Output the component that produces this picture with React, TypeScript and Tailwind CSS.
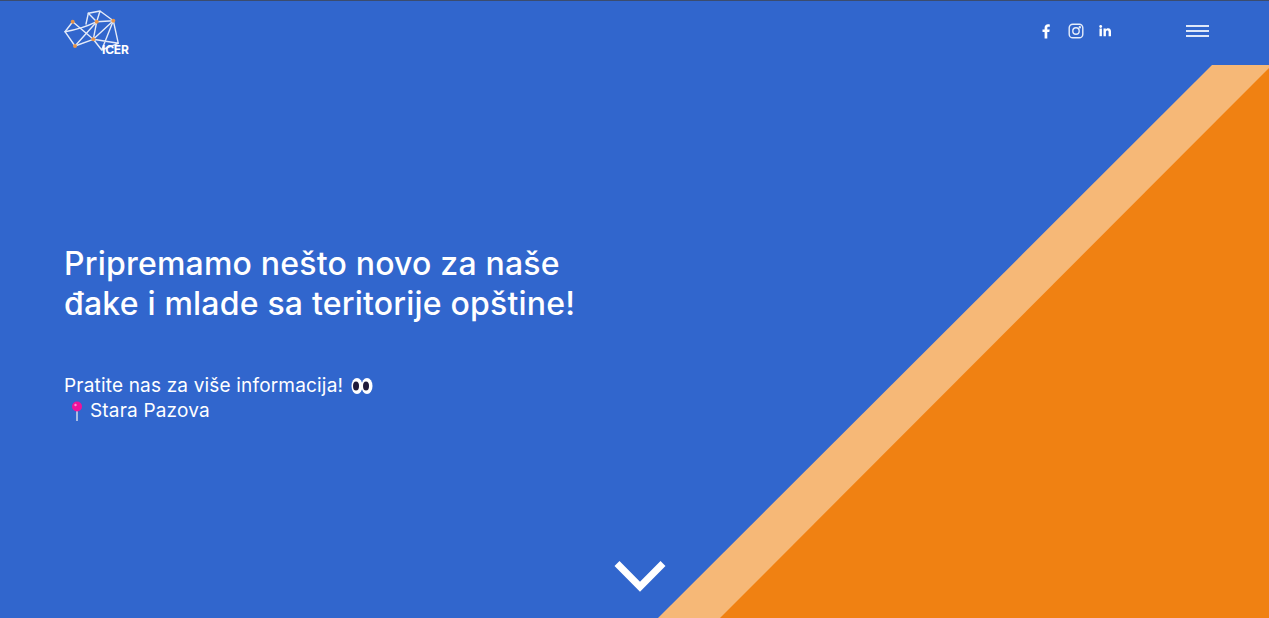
import React from "react";

function Logo() {
  const o = "#e8954a";
  return (
    <svg width="66" height="46" viewBox="0 0 66 46" className="block">
      <g fill="none" stroke="#e4ebf9" strokeWidth="1.400" strokeLinejoin="round" strokeLinecap="round">
        <path d="M8.700 11.700 L1 21.700 L11 36 L29.300 29.300 L8.700 11.700" />
        <path d="M1 21.700 Q18 19 32.700 11.700 L49.300 10.700 L36 1 L24.300 3.300 L32.700 11.700 L36 1" />
        <path d="M24.300 3.300 L22 14 M11 36 L32.700 11.700 L29.300 29.300 L49.300 10.700" />
        <path d="M49.300 10.700 L54.300 33.300 L37.700 40 L29.300 29.300 L54.300 33.300 M49.300 10.700 L37.700 40" />
      </g>
      <g fill={o}>
        <circle cx="8.700" cy="11.700" r="2" />
        <circle cx="32.700" cy="11.700" r="2" />
        <circle cx="49.300" cy="10.700" r="2" />
        <circle cx="29.300" cy="29.300" r="2" />
        <circle cx="11" cy="36" r="2" />
      </g>
    </svg>
  );
}

function Eyes() {
  return (
    <svg width="22" height="19" viewBox="0 0 22 19" className="inline-block">
      <ellipse cx="6" cy="10" rx="5.500" ry="8" fill="#fff" />
      <ellipse cx="16" cy="10" rx="5.500" ry="8" fill="#fff" />
      <ellipse cx="5" cy="10" rx="3" ry="4.500" fill="#1f1a3a" />
      <ellipse cx="15" cy="10" rx="3" ry="4.500" fill="#1f1a3a" />
    </svg>
  );
}

function Pin() {
  return (
    <svg width="14" height="20" viewBox="0 0 14 20" className="inline-block">
      <rect x="6.200" y="8" width="1.600" height="12" fill="#c9d3e8" />
      <circle cx="7" cy="5.500" r="5" fill="#f0129a" />
      <circle cx="5.500" cy="4" r="1.200" fill="#fb8fd0" />
    </svg>
  );
}

export default function App() {
  return (
    <div className="relative h-[618px] w-full overflow-hidden bg-[#3166cd] font-['Inter','Liberation_Sans',sans-serif] text-white">
      <svg className="absolute inset-0" width="1269" height="618" viewBox="0 0 1269 618">
        <polygon points="1212,65 1269,65 1269,618 658,618" fill="#f6b877" />
        <polygon points="1269,68 1269,618 720,618" fill="#f08112" />
      </svg>

      <div className="relative flex h-full flex-col">
        <header className="flex h-[65px] items-start border-t border-[#3b4c6e] pl-[64px] pr-[60px]">
          <div className="relative mt-[9px] h-[46px] w-[66px]">
            <Logo />
            <span className="absolute bottom-[0px] left-[38px] text-[12px] font-bold leading-none tracking-[-0.2px]">ICER</span>
          </div>
          <div className="ml-auto mt-[22px] flex items-center">
            <svg width="16" height="16" viewBox="0 0 16 16" className="mr-[14px]" fill="#fff">
              <path d="M9.300 15.500V8.900h2l.4-2.500H9.300V5c0-.8.3-1.200 1.200-1.200h1.300V1.500C11.400 1.400 10.800 1.300 10 1.300 8 1.300 6.600 2.500 6.600 4.700v1.700H4.500v2.500h2.100v6.600z" />
            </svg>
            <svg width="16" height="16" viewBox="0 0 16 16" className="mr-[14px]" fill="none" stroke="#e6edfa" strokeWidth="1.400">
              <rect x="1.200" y="1.200" width="13.600" height="13.600" rx="3.600" />
              <circle cx="8" cy="8" r="3.200" />
              <circle cx="11.800" cy="4.200" r="0.500" fill="#fff" />
            </svg>
            <svg width="14" height="14" viewBox="0 0 14 14" fill="#fff">
              <rect x="1.500" y="4.500" width="2.400" height="7.700" />
              <circle cx="2.700" cy="2.500" r="1.400" />
              <path d="M5.500 4.500h2.300v1.100c.5-.8 1.400-1.300 2.400-1.300 2 0 2.800 1.300 2.800 3.300v4.600h-2.400V8.100c0-1-.3-1.700-1.200-1.700-1 0-1.500.7-1.500 1.700v4.100H5.500z" />
            </svg>
            <div className="ml-[74px] flex w-[23px] flex-col gap-[3px]">
              <div className="h-[2px] bg-[#dfe8f8]" />
              <div className="h-[2px] bg-[#dfe8f8]" />
              <div className="h-[2px] bg-[#dfe8f8]" />
            </div>
          </div>
        </header>

        <main className="flex-1 pl-[64px]">
          <h1 className="mt-[179px] text-[32px] font-medium leading-[40px] tracking-[0.2px]">
            Pripremamo nešto novo za naše
            <br />
            đake i mlade sa teritorije opštine!
          </h1>
          <div className="mt-[49px] text-[19px] leading-[25px] tracking-[0.18px]">
            <p className="flex items-center gap-[8px]">Pratite nas za više informacija! <Eyes /></p>
            <p className="flex items-center gap-[6px] pl-[6px]"><Pin /><span>Stara Pazova</span></p>
          </div>
        </main>
      </div>

      <svg className="absolute left-[614px] top-[560px]" width="52" height="33" viewBox="0 0 52 33" fill="none" stroke="#fff" strokeWidth="7">
        <path d="M3 3.500 L26 26.700 L49 3.500" />
      </svg>
    </div>
  );
}
